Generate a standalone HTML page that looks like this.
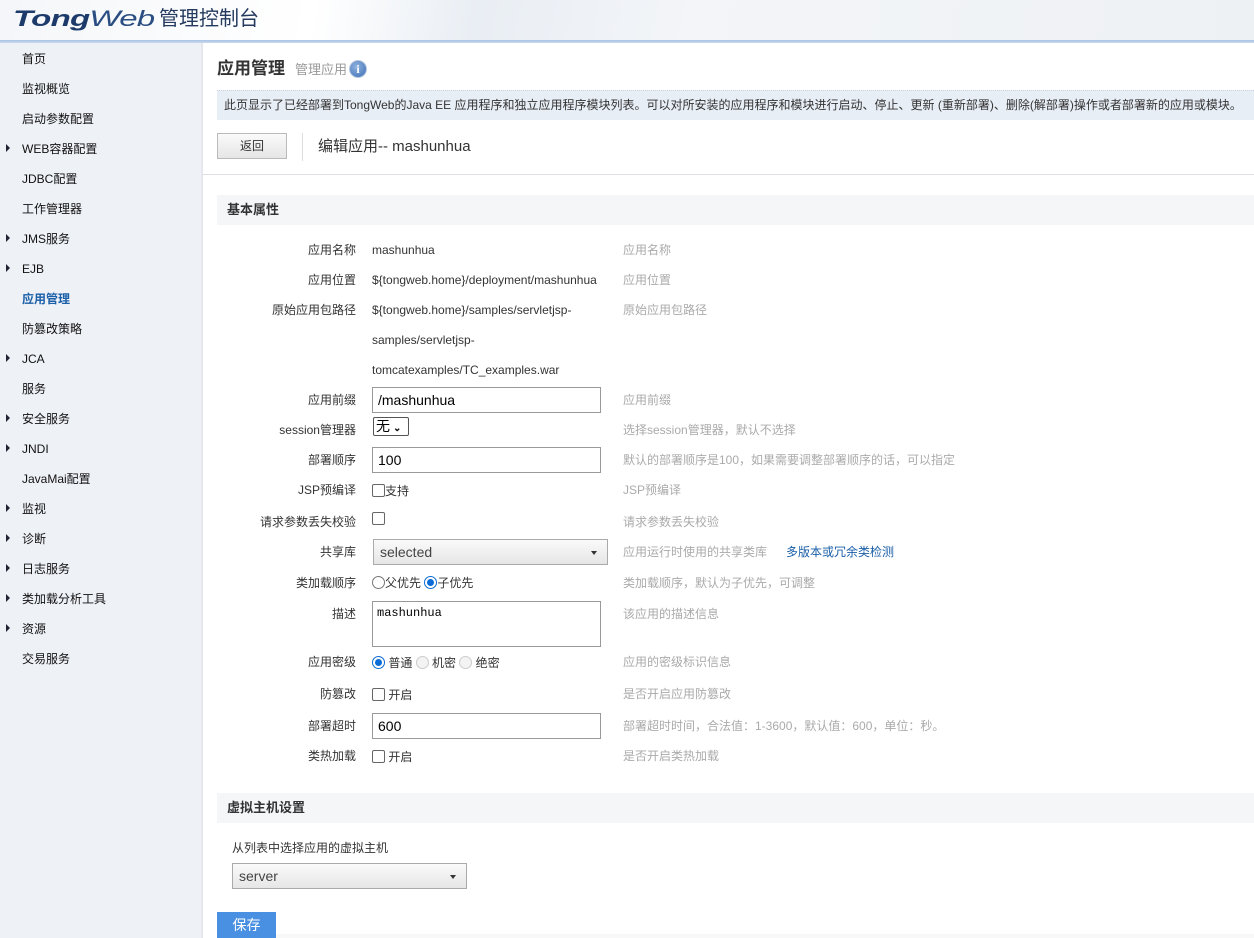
<!DOCTYPE html>
<html><head><meta charset="utf-8"><style>
*{margin:0;padding:0;box-sizing:border-box}
body{width:1254px;height:938px;overflow:hidden;font-family:"Liberation Sans","Noto Sans CJK SC",sans-serif;font-size:12px;line-height:16px;color:#333;background:#fff;position:relative}
.a{position:absolute;white-space:nowrap}
#hdr{left:0;top:0;width:1254px;height:40px;background:linear-gradient(100deg,#f4f6f9 0%,#fff 25%,#e9eef4 38%,#f3f5f8 55%,#eef1f4 100%)}
#line{left:0;top:40px;width:1254px;height:3px;background:linear-gradient(#a9c3e3,#c9d9ee)}
#side{left:0;top:43px;width:201px;height:895px;background:#eef1f6}
.m{position:absolute;left:22px;font-size:12px;line-height:16px;color:#111;white-space:nowrap}
.tri{position:absolute;left:6px;width:0;height:0;border-top:4px solid transparent;border-bottom:4px solid transparent;border-left:4px solid #223}
.lab{position:absolute;right:898px;text-align:right;color:#333;white-space:nowrap}
.val{position:absolute;left:372px;white-space:nowrap;color:#333}
.hint{position:absolute;left:623px;color:#aaa;white-space:nowrap}
.inp{position:absolute;left:372px;width:229px;height:26px;border:1px solid #999;background:#fff;font-size:14px;color:#000;padding:3px 5px;line-height:18px}
.cb{display:inline-block;width:13px;height:13px;border:1px solid #666;border-radius:2px;background:#fff;vertical-align:-2px}
.rd{display:inline-block;width:13px;height:13px;border:1px solid #777;border-radius:50%;background:#fff;vertical-align:-2px;position:relative}
.rd.on{border:1px solid #0a6cd6}
.rd.on:after{content:"";position:absolute;left:2px;top:2px;width:7px;height:7px;border-radius:50%;background:#0a6cd6}
.rd.dis{border-color:#ccc;background:#f3f3f3}
.sel{position:absolute;border:1px solid #aaa;background:linear-gradient(#fafafa,#e6e6e6);font-size:14px;color:#444;padding:0 6px;line-height:24px}
.sel:after{content:"";position:absolute;right:10px;top:11px;border-left:3.5px solid transparent;border-right:3.5px solid transparent;border-top:4px solid #333}
</style></head><body>
<div class="a" id="hdr"></div>
<div class="a" style="left:13px;top:6px;font-size:22px;line-height:26px;font-weight:bold;font-style:italic;color:#1c3a6a;letter-spacing:-0.5px;transform:scaleX(1.5);transform-origin:left">Tong<span style="font-weight:normal;color:#2a4d82">Web</span></div>
<div class="a" style="left:159px;top:7px;font-size:20px;line-height:24px;color:#243a5e">管理控制台</div>
<div class="a" id="line"></div>
<div class="a" id="side"></div>
<div class="m" style="top:51px">首页</div>
<div class="m" style="top:81px">监视概览</div>
<div class="m" style="top:111px">启动参数配置</div>
<div class="tri" style="top:144px"></div><div class="m" style="top:141px">WEB容器配置</div>
<div class="m" style="top:171px">JDBC配置</div>
<div class="m" style="top:201px">工作管理器</div>
<div class="tri" style="top:234px"></div><div class="m" style="top:231px">JMS服务</div>
<div class="tri" style="top:264px"></div><div class="m" style="top:261px">EJB</div>
<div class="m" style="top:291px;color:#1a5fa8;font-weight:bold">应用管理</div>
<div class="m" style="top:321px">防篡改策略</div>
<div class="tri" style="top:354px"></div><div class="m" style="top:351px">JCA</div>
<div class="m" style="top:381px">服务</div>
<div class="tri" style="top:414px"></div><div class="m" style="top:411px">安全服务</div>
<div class="tri" style="top:444px"></div><div class="m" style="top:441px">JNDI</div>
<div class="m" style="top:471px">JavaMai配置</div>
<div class="tri" style="top:504px"></div><div class="m" style="top:501px">监视</div>
<div class="tri" style="top:534px"></div><div class="m" style="top:531px">诊断</div>
<div class="tri" style="top:564px"></div><div class="m" style="top:561px">日志服务</div>
<div class="tri" style="top:594px"></div><div class="m" style="top:591px">类加载分析工具</div>
<div class="tri" style="top:624px"></div><div class="m" style="top:621px">资源</div>
<div class="m" style="top:651px">交易服务</div>
<div class="a" style="left:201px;top:43px;width:2px;height:895px;background:#e4e8ee"></div>

<div class="a" style="left:217px;top:57px;font-size:17px;line-height:24px;font-weight:bold;color:#333">应用管理</div>
<div class="a" style="left:295px;top:62px;font-size:13px;color:#999">管理应用</div>
<div class="a" style="left:349px;top:60px;width:18px;height:18px;border-radius:50%;background:radial-gradient(circle at 40% 35%,#8fb2e0,#3d6eb5);border:1px solid #b8c9e0;color:#fff;font-size:12px;font-weight:bold;text-align:center;line-height:16px;font-family:'Liberation Serif',serif">i</div>
<div class="a" style="left:217px;top:90px;width:1037px;height:30px;background:#e8eef6;border-top:1px dotted #c9d3df;padding:6px 0 0 7px;font-size:12px;color:#333">此页显示了已经部署到TongWeb的Java EE 应用程序和独立应用程序模块列表。可以对所安装的应用程序和模块进行启动、停止、更新 (重新部署)、删除(解部署)操作或者部署新的应用或模块。</div>
<div class="a" style="left:217px;top:133px;width:70px;height:26px;border:1px solid #bbb;background:linear-gradient(#fafafa,#e6e6e6);text-align:center;line-height:24px;font-size:12px;color:#333">返回</div>
<div class="a" style="left:302px;top:133px;width:1px;height:28px;background:#ddd"></div>
<div class="a" style="left:318px;top:138px;font-size:15px;line-height:18px;color:#333">编辑应用-- mashunhua</div>
<div class="a" style="left:202px;top:174px;width:1052px;height:1px;background:#dcdfe4"></div>

<div class="a" style="left:217px;top:195px;width:1037px;height:30px;background:#f5f6f8;padding:7px 0 0 10px;font-weight:bold;font-size:13px;color:#333">基本属性</div>

<div class="lab" style="top:242px">应用名称</div><div class="val" style="top:242px">mashunhua</div><div class="hint" style="top:242px">应用名称</div>
<div class="lab" style="top:272px">应用位置</div><div class="val" style="top:272px">${tongweb.home}/deployment/mashunhua</div><div class="hint" style="top:272px">应用位置</div>
<div class="lab" style="top:302px">原始应用包路径</div><div class="val" style="top:302px">${tongweb.home}/samples/servletjsp-</div><div class="hint" style="top:302px">原始应用包路径</div>
<div class="val" style="top:332px">samples/servletjsp-</div>
<div class="val" style="top:362px">tomcatexamples/TC_examples.war</div>
<div class="lab" style="top:392px">应用前缀</div><div class="inp" style="top:387px">/mashunhua</div><div class="hint" style="top:392px">应用前缀</div>
<div class="lab" style="top:422px">session管理器</div><div class="a" style="left:373px;top:417px;width:36px;height:19px;border:1px solid #555;border-radius:2px;font-size:14px;line-height:16px;padding-left:2px;color:#000">无<span style="font-size:10px;font-weight:bold;margin-left:3px">&#8964;</span></div><div class="hint" style="top:422px">选择session管理器，默认不选择</div>
<div class="lab" style="top:452px">部署顺序</div><div class="inp" style="top:447px">100</div><div class="hint" style="top:452px">默认的部署顺序是100，如果需要调整部署顺序的话，可以指定</div>
<div class="lab" style="top:482px">JSP预编译</div><div class="val" style="top:483px"><span class="cb"></span>支持</div><div class="hint" style="top:482px">JSP预编译</div>
<div class="lab" style="top:514px">请求参数丢失校验</div><div class="val" style="top:511px"><span class="cb"></span></div><div class="hint" style="top:514px">请求参数丢失校验</div>
<div class="lab" style="top:544px">共享库</div><div class="sel" style="left:373px;top:539px;width:235px;height:26px">selected</div><div class="hint" style="top:544px">应用运行时使用的共享类库<span style="color:#1a5fa8;margin-left:19px">多版本或冗余类检测</span></div>
<div class="lab" style="top:575px">类加载顺序</div><div class="val" style="top:575px"><span class="rd"></span>父优先 <span class="rd on"></span>子优先</div><div class="hint" style="top:575px">类加载顺序，默认为子优先，可调整</div>
<div class="lab" style="top:606px">描述</div><div class="inp" style="top:601px;height:46px;font-family:'Liberation Mono','DejaVu Sans Mono',monospace;font-size:12px;padding:2px 4px">mashunhua</div><div class="hint" style="top:606px">该应用的描述信息</div>
<div class="lab" style="top:654px">应用密级</div><div class="val" style="top:655px"><span class="rd on"></span> 普通 <span class="rd dis"></span> 机密 <span class="rd dis"></span> 绝密</div><div class="hint" style="top:654px">应用的密级标识信息</div>
<div class="lab" style="top:686px">防篡改</div><div class="val" style="top:687px"><span class="cb"></span> 开启</div><div class="hint" style="top:686px">是否开启应用防篡改</div>
<div class="lab" style="top:718px">部署超时</div><div class="inp" style="top:713px">600</div><div class="hint" style="top:718px">部署超时时间，合法值：1-3600，默认值：600，单位：秒。</div>
<div class="lab" style="top:748px">类热加载</div><div class="val" style="top:749px"><span class="cb"></span> 开启</div><div class="hint" style="top:748px">是否开启类热加载</div>

<div class="a" style="left:217px;top:793px;width:1037px;height:30px;background:#f5f6f8;padding:7px 0 0 10px;font-weight:bold;font-size:13px;color:#333">虚拟主机设置</div>
<div class="a" style="left:232px;top:840px;color:#333">从列表中选择应用的虚拟主机</div>
<div class="sel" style="left:232px;top:863px;width:235px;height:26px">server</div>
<div class="a" style="left:217px;top:912px;width:59px;height:26px;background:#4a90e2;color:#fff;text-align:center;line-height:26px;font-size:14px">保存</div>
<div class="a" style="left:276px;top:934px;width:978px;height:4px;background:#f8f8f8"></div>
</body></html>
